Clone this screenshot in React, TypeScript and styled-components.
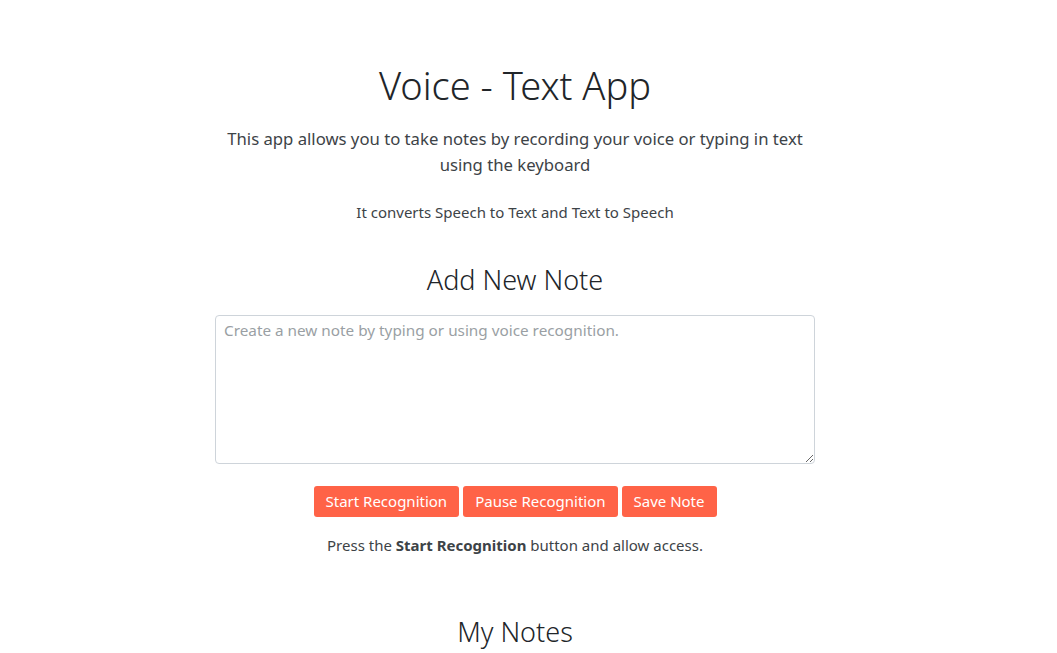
import styled, { createGlobalStyle } from "styled-components";

const GlobalStyle = createGlobalStyle`
  html, body {
    margin: 0;
    padding: 0;
    background: #fff;
  }
  body {
    font-family: "Noto Sans", "Open Sans", sans-serif;
    color: #212529;
  }
  * {
    box-sizing: border-box;
  }
`;

const buttons = ["Start Recognition", "Pause Recognition", "Save Note"];

const App = () => {
  return (
    <>
      <GlobalStyle />
      <Page>
        <Main>
          <Title>Voice - Text App</Title>
          <Lead>
            This app allows you to take notes by recording your voice or typing
            in text using the keyboard
          </Lead>
          <Note>It converts Speech to Text and Text to Speech</Note>
          <SectionTitle $top={40}>Add New Note</SectionTitle>
          <NoteInput placeholder="Create a new note by typing or using voice recognition." />
          <ButtonRow>
            {buttons.map((b) => (
              <ActionButton key={b}>{b}</ActionButton>
            ))}
          </ButtonRow>
          <Hint>
            Press the <strong>Start Recognition</strong> button and allow
            access.
          </Hint>
          <SectionTitle $top={59}>My Notes</SectionTitle>
        </Main>
      </Page>
    </>
  );
};

const Page = styled.div`
  width: 1030px;
  padding-top: 61px;
`;

const Main = styled.main`
  width: 600px;
  margin: 0 auto;
  display: flex;
  flex-direction: column;
  align-items: center;
  text-align: center;
`;

const Title = styled.h1`
  margin: 0;
  font-size: 38px;
  line-height: 48px;
  font-weight: 300;
  color: #212529;
`;

const Lead = styled.p`
  margin: 17px 0 0;
  font-size: 16.7px;
  line-height: 26px;
  font-weight: 400;
  color: #3d4347;
`;

const Note = styled.p`
  margin: 23px 0 0;
  font-size: 15px;
  line-height: 22px;
  color: #3d4347;
`;

const SectionTitle = styled.h2<{ $top: number }>`
  margin: ${(p) => p.$top}px 0 0;
  font-size: 27px;
  line-height: 34px;
  font-weight: 300;
  color: #212529;
`;

const NoteInput = styled.textarea`
  margin-top: 18px;
  width: 600px;
  height: 149px;
  padding: 4px 8px;
  border: 1px solid #ced4da;
  border-radius: 4px;
  font-family: "Noto Sans", "Open Sans", sans-serif;
  font-size: 15.3px;
  line-height: 20px;
  color: #495057;
  resize: vertical;
  &::placeholder {
    color: #9a9fa4;
  }
`;

const ButtonRow = styled.div`
  margin-top: 22px;
  display: flex;
  gap: 4px;
  justify-content: center;
`;

const ActionButton = styled.button`
  height: 31px;
  padding: 0 12px;
  border: none;
  border-radius: 3px;
  background: #ff6347;
  color: #fff;
  font-family: "Noto Sans", "Open Sans", sans-serif;
  font-size: 15px;
  line-height: 31px;
  cursor: pointer;
`;

const Hint = styled.p`
  margin: 17px 0 0;
  font-size: 15px;
  line-height: 22px;
  color: #3d4347;
  strong {
    font-weight: 700;
  }
`;

export default App;
